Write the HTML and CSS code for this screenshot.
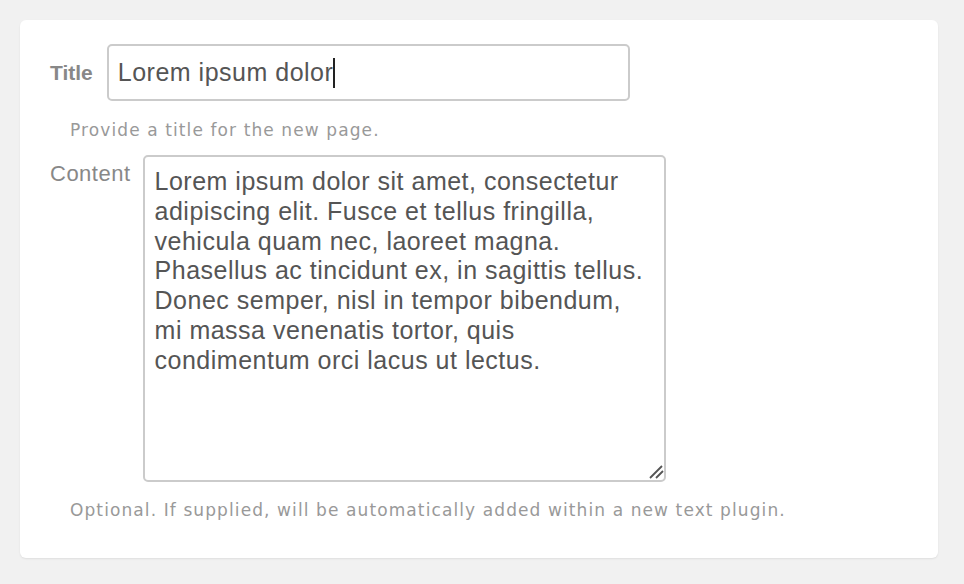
FILE: index.html
```html
<!DOCTYPE html>
<html lang="en">
<head>
<meta charset="utf-8">
<title>New page</title>
<link rel="stylesheet" href="styles.css">
</head>
<body>
<div class="card">
  <div class="field-row title-row">
    <label class="label label-bold">Title</label>
    <div class="input"><span>Lorem ipsum dolor</span><span class="caret"></span></div>
  </div>
  <p class="help help-title">Provide a title for the new page.</p>
  <div class="field-row content-row">
    <label class="label label-content">Content</label>
    <div class="textarea">
      <div class="textarea-text">Lorem ipsum dolor sit amet, consectetur<br>adipiscing elit. Fusce et tellus fringilla,<br>vehicula quam nec, laoreet magna.<br>Phasellus ac tincidunt ex, in sagittis tellus.<br>Donec semper, nisl in tempor bibendum,<br>mi massa venenatis tortor, quis<br>condimentum orci lacus ut lectus.</div>
      <svg class="grip" width="16" height="16" viewBox="0 0 16 16"><path d="M2 14 L14 2 M8 14 L15 7" stroke="#555" stroke-width="1.8" fill="none"/></svg>
    </div>
  </div>
  <p class="help help-content">Optional. If supplied, will be automatically added within a new text plugin.</p>
</div>
</body>
</html>
```

FILE: styles.css
```css
html, body {
  margin: 0;
  padding: 0;
}
body {
  background: #f1f1f1;
  padding: 20px 26px 26px 20px;
  font-family: "Liberation Sans", Arial, sans-serif;
}
.card {
  background: #fff;
  border-radius: 6px;
  box-shadow: 0 1px 2px rgba(0,0,0,0.08);
  padding: 24px 30px 39px 30px;
  height: 538px;
  box-sizing: border-box;
}
.field-row {
  display: flex;
}
.title-row {
  align-items: center;
}
.content-row {
  align-items: flex-start;
  margin-top: 15px;
}
.label {
  color: #888;
  font-size: 22px;
  line-height: 26px;
}
.label-bold {
  font-weight: bold;
  font-size: 21px;
  margin-right: 14px;
}
.label-content {
  letter-spacing: 0.5px;
  margin-right: 12px;
  margin-top: 6px;
}
.input {
  width: 523px;
  height: 57px;
  box-sizing: border-box;
  border: 2px solid #cbcbcb;
  border-radius: 5px;
  padding: 0 9px;
  display: flex;
  align-items: center;
  color: #555;
  font-size: 25px;
  letter-spacing: 0.5px;
}
.caret {
  display: inline-block;
  width: 2px;
  height: 30px;
  background: #222;
}
.help {
  margin: 19px 0 0 20px;
  font-family: "DejaVu Sans", Verdana, sans-serif;
  font-size: 17px;
  letter-spacing: 1.1px;
  line-height: 20px;
  color: #999;
}
.help-content {
  margin-top: 18px;
}
.textarea {
  position: relative;
  width: 523px;
  height: 327px;
  box-sizing: border-box;
  border: 2px solid #cbcbcb;
  border-radius: 5px;
  padding: 10px 10px;
}
.textarea-text {
  color: #555;
  font-size: 25px;
  letter-spacing: 0.5px;
  line-height: 29.8px;
  white-space: nowrap;
}
.grip {
  position: absolute;
  right: 0;
  bottom: 0;
}
```
